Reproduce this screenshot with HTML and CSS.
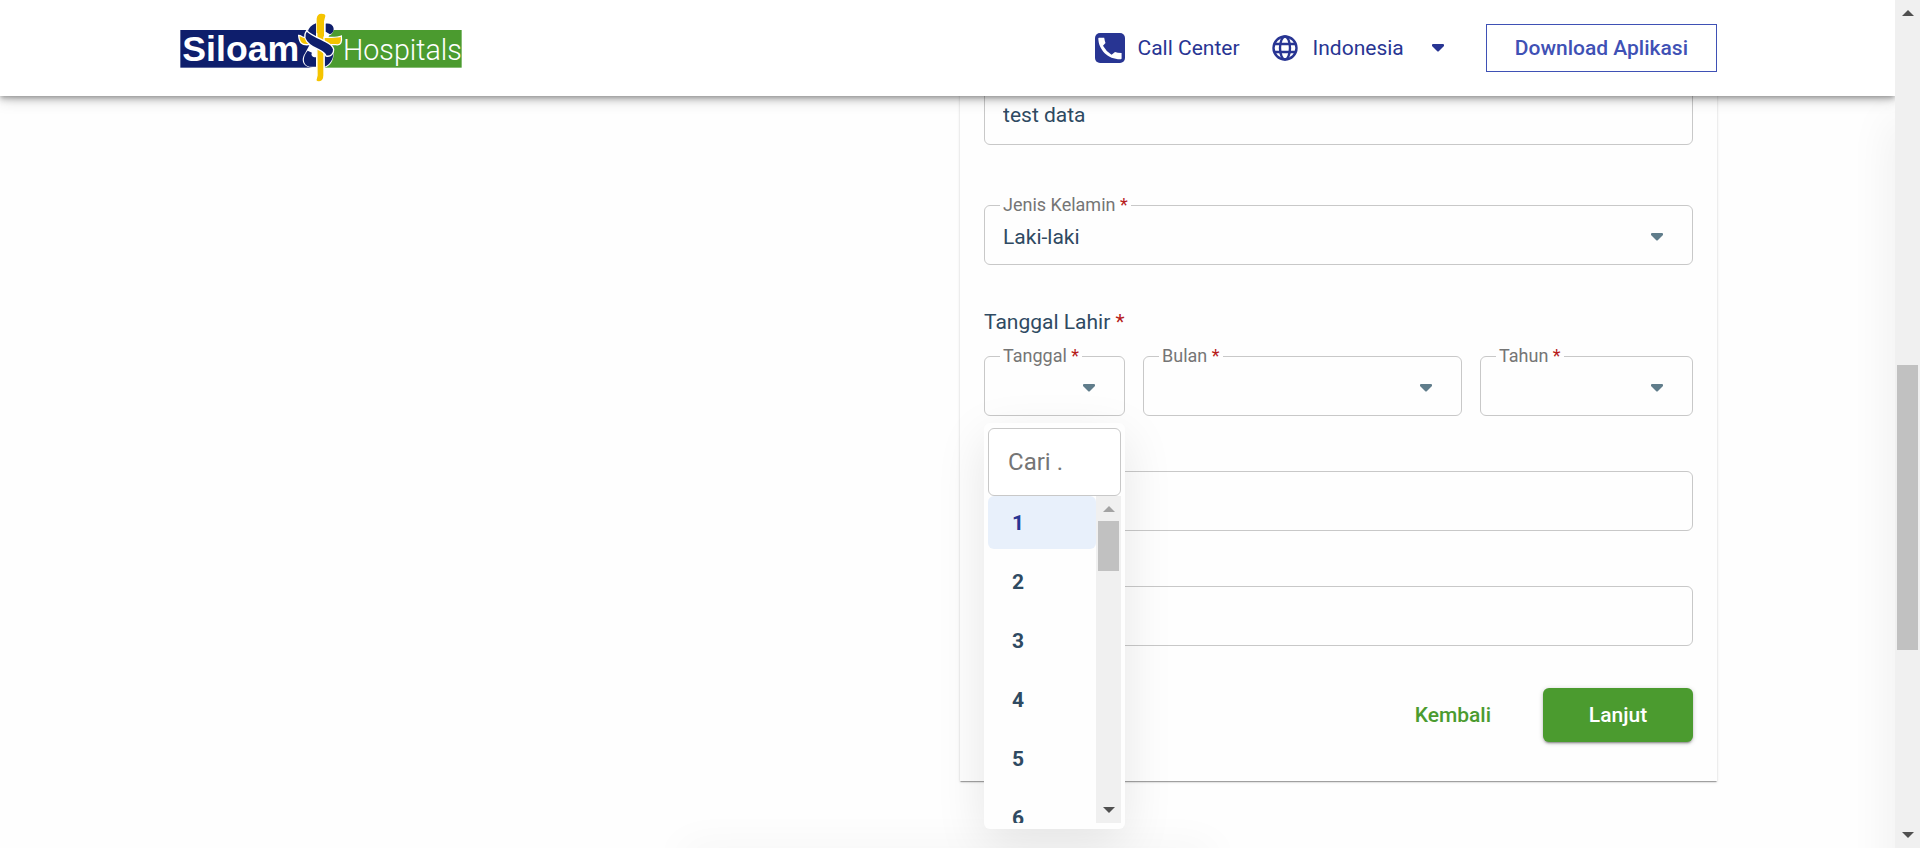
FILE: index.html
```html
<!DOCTYPE html>
<html lang="id">
<head>
<meta charset="utf-8">
<title>Siloam Hospitals</title>
<link rel="stylesheet" href="styles.css">
</head>
<body>
<svg class="defs" aria-hidden="true">
  <symbol id="caret" viewBox="0 0 12 8"><path d="M1 0h10q1 0 1 1v1L7 7Q6 8 5 7L0 2V1q0-1 1-1z" fill="currentColor"/></symbol>
  <symbol id="tri-up" viewBox="0 0 12 6"><path d="M0 6 6 0l6 6z" fill="currentColor"/></symbol>
  <symbol id="tri-down" viewBox="0 0 12 6"><path d="M0 0h12L6 6z" fill="currentColor"/></symbol>
</svg>
<div class="page">
  <header class="header">
    <a class="logo" href="#" aria-label="Siloam Hospitals">
      <svg viewBox="57 36 852 216" width="284" height="72">
        <rect x="61" y="90" width="422" height="113" fill="#0e1e6c"/>
        <rect x="483" y="90" width="422" height="113" fill="#4b9b2f"/>
        <text class="logo-bold" x="67" y="183">Siloam</text>
        <text class="logo-light" x="549" y="180">Hospitals</text>
        <path d="M466 68C440 76 432 106 452 128L436 158C420 180 428 204 466 204H492C512 198 522 180 521 156C520 142 510 134 498 126L508 106C528 98 526 66 498 68Z" fill="#fff"/>
        <path d="M497 71C524 68 528 96 510 103L497 95Z" fill="#0e1e6c"/>
        <path d="M468 70C440 80 434 110 454 126H468Z" fill="#0e1e6c"/>
        <path d="M443 152C428 168 426 194 448 200H468V172C456 172 452 164 456 158Z" fill="#0e1e6c"/>
        <path d="M494 200C510 192 520 178 520 158L494 166Z" fill="#0e1e6c"/>
        <path d="M416 106C418 128 424 136 446 134L528 134C544 138 546 124 544 108C530 114 516 112 500 112H432C424 112 424 106 416 106Z" fill="#f5c400" stroke="#fff" stroke-width="4"/>
        <path d="M470 56Q472 41 484 41Q496 41 496 48L492 64V226Q492 245 478 246Q466 246 468 238L471 226Z" fill="#f5c400" stroke="#fff" stroke-width="4"/>
        <path d="M440 92C430 106 434 122 450 134C470 150 494 152 498 168C512 172 522 160 521 148C518 132 500 128 484 118C466 110 452 104 440 92Z" fill="#0e1e6c" stroke="#fff" stroke-width="4"/>
        <path d="M470 98V56Q472 41 484 41Q496 41 496 48L492 64V110Z" fill="#f5c400"/>
      </svg>
    </a>
    <nav class="nav">
      <a class="nav-link call" href="#">
        <svg width="30" height="30" viewBox="0 0 30 30"><rect width="30" height="30" rx="5" fill="#283593"/><path d="M4 4.700h5.200q.5 3 1.300 5.200L8 12.700q3 5.600 8.600 9l3.400-2.700q2.400.8 6.600 1v5.600q-.1.700-.9.700C13 26.500 3.600 17 3.300 5.500q0-.7.700-.8z" fill="#fff"/></svg>
        Call Center
      </a>
      <button class="nav-link lang" type="button">
        <svg width="26" height="26" viewBox="0 0 26 26" fill="none" stroke="currentColor" stroke-width="2.400"><circle cx="13" cy="13" r="11.500"/><ellipse cx="13" cy="13" rx="5" ry="11.500"/><path d="M2.500 9h21M2.500 17h21"/></svg>
        <span>Indonesia</span>
        <svg class="caret" width="12" height="8"><use href="#caret"/></svg>
      </button>
      <button class="download" type="button">Download Aplikasi</button>
    </nav>
  </header>
  <main class="main">
    <form class="card">
      <div class="field"><input id="nama" type="text" value="test data" aria-label="Nama"></div>
      <div class="field gap-lg">
        <label for="jk">Jenis Kelamin <b>*</b></label>
        <select id="jk"><option>Laki-laki</option></select>
        <svg class="caret" width="12" height="8"><use href="#caret"/></svg>
      </div>
      <p class="group-title">Tanggal Lahir <b>*</b></p>
      <div class="date-row">
        <div class="field">
          <label for="tgl">Tanggal <b>*</b></label>
          <select id="tgl"><option></option></select>
          <svg class="caret" width="12" height="8"><use href="#caret"/></svg>
          <div class="menu">
            <input class="search" type="text" placeholder="Cari ." aria-label="Cari">
            <div class="list-box">
              <ul class="list">
                <li class="active">1</li>
                <li>2</li>
                <li>3</li>
                <li>4</li>
                <li>5</li>
                <li>6</li>
              </ul>
              <div class="scroll">
                <svg class="muted" width="12" height="6"><use href="#tri-up"/></svg>
                <div class="track"><div class="thumb list-thumb"></div></div>
                <svg width="12" height="6"><use href="#tri-down"/></svg>
              </div>
            </div>
          </div>
        </div>
        <div class="field">
          <label for="bln">Bulan <b>*</b></label>
          <select id="bln"><option></option></select>
          <svg class="caret" width="12" height="8"><use href="#caret"/></svg>
        </div>
        <div class="field">
          <label for="thn">Tahun <b>*</b></label>
          <select id="thn"><option></option></select>
          <svg class="caret" width="12" height="8"><use href="#caret"/></svg>
        </div>
      </div>
      <div class="field gap-md"><input id="telepon" type="text" aria-label="Telepon"></div>
      <div class="field gap-md"><input id="email" type="text" aria-label="Email"></div>
      <div class="actions">
        <button class="back" type="button">Kembali</button>
        <button class="next" type="button">Lanjut</button>
      </div>
    </form>
  </main>
  <div class="edge-shadow"></div>
  <div class="bottom-shadow"></div>
</div>
<div class="scroll page-scroll">
  <svg width="12" height="6"><use href="#tri-up"/></svg>
  <div class="track page-track"><div class="thumb page-thumb"></div></div>
  <svg width="12" height="6"><use href="#tri-down"/></svg>
</div>
</body>
</html>
```
FILE: styles.css
```css
* { box-sizing: border-box; }

body {
  margin: 0;
  display: flex;
  height: 100vh;
  overflow: hidden;
  background: #fefefe;
  color: #2f4a62;
  font: 400 21px/24px Roboto, "Liberation Sans", sans-serif;
}

button, input, select { font: inherit; color: inherit; }
button { cursor: pointer; }
a { color: inherit; text-decoration: none; }
b { color: #b71c1c; font-weight: 400; }
.defs { position: absolute; width: 0; height: 0; }

.page {
  position: relative;
  flex: 1;
  min-width: 0;
  overflow: hidden;
}

/* Header */
.header {
  position: relative;
  z-index: 3;
  display: flex;
  align-items: center;
  justify-content: space-between;
  height: 96px;
  padding: 0 178px 0 179px;
  background: #fff;
  box-shadow: 0 2px 4px -1px rgba(0, 0, 0, .22), 0 4px 6px rgba(0, 0, 0, .16), 0 1px 16px rgba(0, 0, 0, .22);
}
.logo, .logo svg { display: block; }
.logo-bold { font: 700 107px "Liberation Sans", Arial, sans-serif; fill: #fff; }
.logo-light { font: 300 86px Roboto, sans-serif; fill: #fff; }
.nav { display: flex; align-items: center; color: #283593; }
.nav-link { display: flex; align-items: center; padding: 0; border: 0; background: none; }
.call { gap: 12px; margin-right: 32px; }
.lang { gap: 15px; margin-right: 42px; }
.lang .caret { margin-left: 13px; }
.download {
  height: 48px;
  padding: 0 28px;
  border: 1px solid #3f51b5;
  background: #fff;
  color: #3f51b5;
  font-weight: 500;
}

/* Form card */
.main {
  display: flex;
  justify-content: flex-end;
  margin-top: -36px;
  padding: 0 178px 0 180px;
}
.card {
  width: 49.25%;
  padding: 25px 24px 39px;
  background: #fefefe;
  box-shadow: 0 2px 1px -1px rgba(0, 0, 0, .2), 0 1px 1px rgba(0, 0, 0, .14), 0 1px 3px rgba(0, 0, 0, .12);
}
.field { position: relative; }
.field > input, .field > select {
  display: block;
  width: 100%;
  height: 60px;
  padding: 0 18px;
  border: 1px solid #c8c8c8;
  border-radius: 6px;
  background: transparent;
  appearance: none;
  outline: 0;
}
.field > select { padding-top: 4px; }
.field > label {
  position: absolute;
  top: -10px;
  left: 16px;
  padding: 0 3px;
  background: #fefefe;
  color: #757575;
  font-size: 18px;
  line-height: 20px;
}
.field > .caret {
  position: absolute;
  top: 28px;
  right: 30px;
  color: #607d8b;
  pointer-events: none;
}
.gap-lg { margin-top: 60px; }
.gap-md { margin-top: 55px; }
.group-title { margin: 45px 0 22px; }
.date-row {
  display: grid;
  grid-template-columns: 141fr 319fr 213fr;
  gap: 18px;
}
.actions {
  display: flex;
  justify-content: flex-end;
  gap: 16px;
  margin-top: 42px;
}
.actions button {
  height: 54px;
  border: 0;
  border-radius: 6px;
  font-weight: 500;
}
.back { padding: 0 36px; background: none; color: #4b9b2f; }
.actions .next {
  width: 150px;
  background: #4b9b2f;
  color: #fff;
  box-shadow: 0 3px 1px -2px rgba(0, 0, 0, .2), 0 2px 2px rgba(0, 0, 0, .14), 0 1px 5px rgba(0, 0, 0, .2);
}

/* Day menu */
.menu {
  position: absolute;
  z-index: 2;
  top: 67px;
  left: 0;
  right: 0;
  padding: 5px 4px 6px;
  border-radius: 6px;
  background: #fefefe;
  box-shadow: 0 15px 50px rgba(0, 0, 0, .1);
}
.search {
  display: block;
  width: 100%;
  height: 68px;
  padding: 0 19px;
  border: 1px solid #c8c8c8;
  border-radius: 6px;
  background: #fff;
  font-size: 24px;
  outline: 0;
}
.search::placeholder { color: #757575; opacity: 1; }
.list-box { display: flex; height: 327px; overflow: hidden; }
.list {
  flex: 1;
  margin: 0;
  padding: 0;
  list-style: none;
  font-weight: 700;
}
.list li {
  height: 53px;
  margin-bottom: 6px;
  padding-left: 24px;
  border-radius: 6px;
  line-height: 54px;
}
.list .active { background: #e8f0fb; color: #283593; }

/* Scroll bars */
.scroll {
  display: flex;
  flex-direction: column;
  align-items: center;
  width: 25px;
  padding: 10px 0;
  background: #f0f0f0;
  color: #505050;
}
.scroll .muted { color: #a3a3a3; }
.track { flex: 1; padding-top: 9px; }
.thumb { width: 21px; background: #c1c1c1; }
.list-thumb { height: 50px; }
.page-track { display: flex; flex-direction: column; }
.page-thumb { height: 285px; margin-top: 340px; }

/* Shadows cast by panels resting outside the window */
.edge-shadow {
  position: absolute;
  top: 120px;
  bottom: -60px;
  right: -20px;
  width: 20px;
  box-shadow: 0 0 44px rgba(0, 0, 0, .1);
}
.bottom-shadow {
  position: absolute;
  left: 36%;
  bottom: -20px;
  width: 28%;
  height: 20px;
  box-shadow: 0 0 40px rgba(0, 0, 0, .06);
}
```
